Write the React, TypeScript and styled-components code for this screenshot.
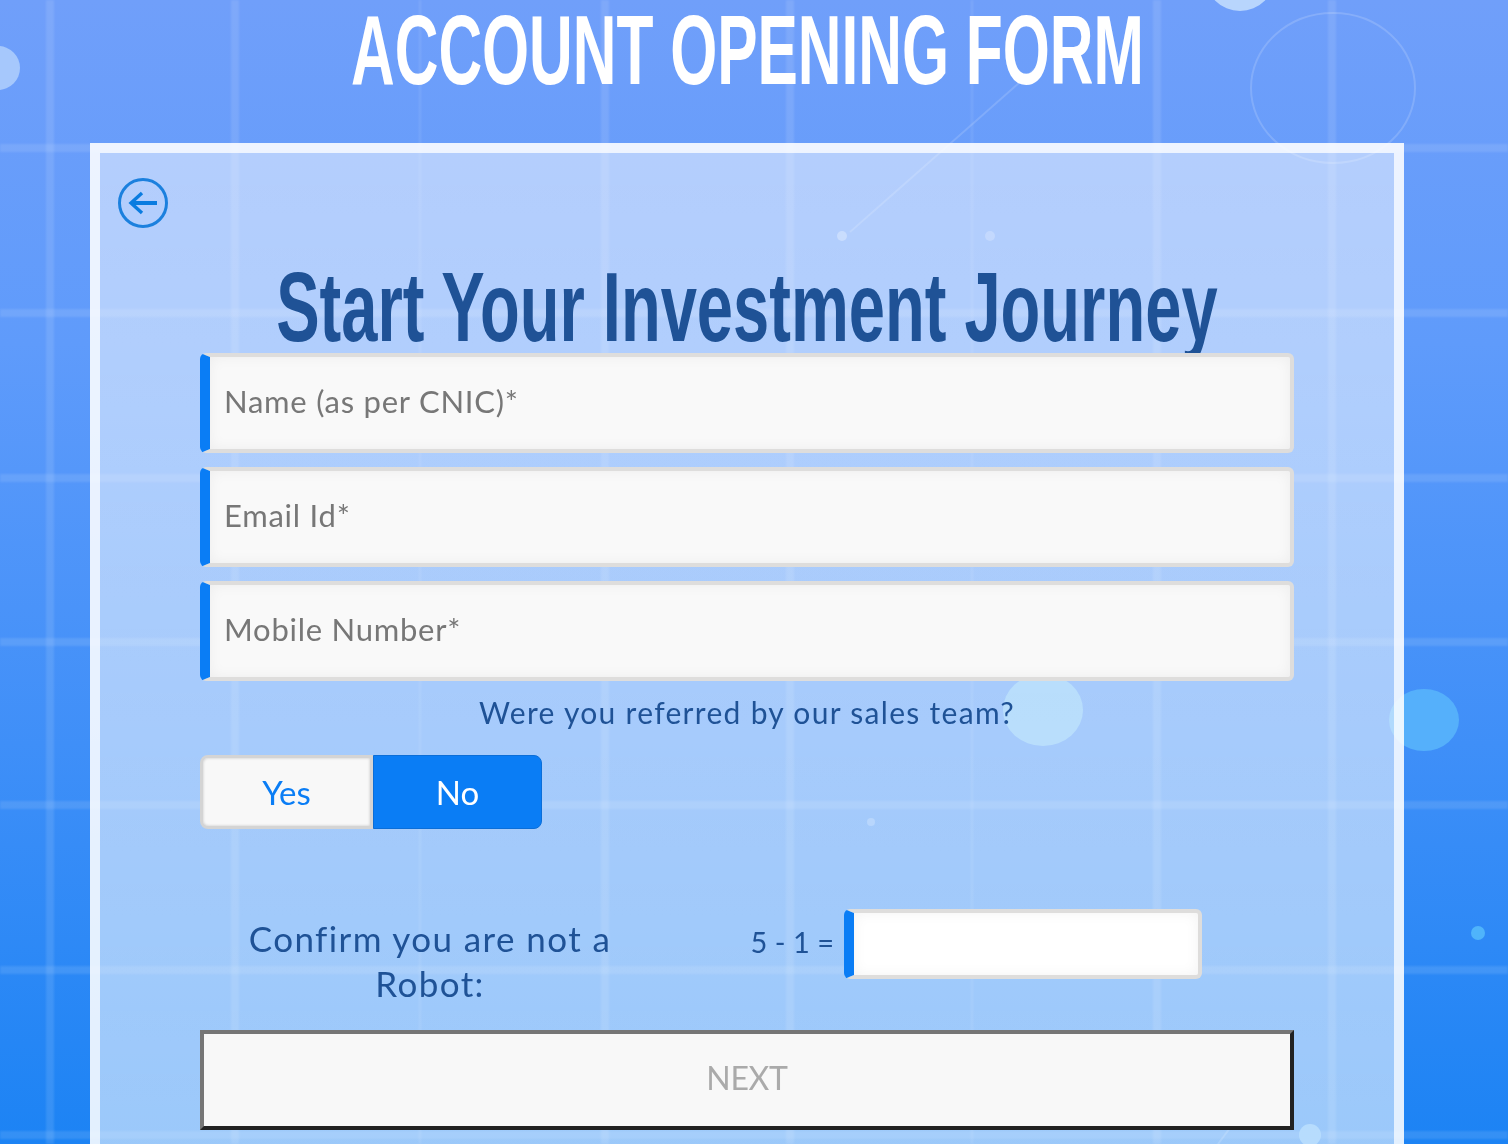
import React from "react";
import styled, { createGlobalStyle } from "styled-components";

const Global = createGlobalStyle`
  html, body { margin: 0; padding: 0; height: 1144px; overflow: hidden; }
  * { box-sizing: border-box; }
  #root { height: 1144px; }
`;

const body = `"Lato", "Open Sans", sans-serif`;
const narrow = `"Liberation Sans", Arial, sans-serif`;

const Page = styled.div`
  position: relative;
  width: 1508px;
  height: 1144px;
  overflow: hidden;
  padding: 0 104px 0 90px;
  background: linear-gradient(180deg, #709ffa 0%, #5f9bfb 30%, #3f8ff8 65%, #1c83f4 100%);
`;
const Backdrop = styled.svg`
  position: absolute;
  left: 0;
  top: 0;
`;
const Content = styled.div`
  position: relative;
`;
const Heading = styled.h1`
  margin: 0;
  height: 143px;
  display: flex;
  justify-content: center;
  font: 700 98px/100px ${narrow};
  color: #fff;
  white-space: nowrap;
`;
const Condensed = styled.span<{ $x: number }>`
  display: inline-block;
  flex: none;
  transform: scaleX(${p => p.$x});
`;
const Panel = styled.section`
  border: 10px solid rgba(255, 255, 255, 0.88);
  background: linear-gradient(180deg, rgba(255, 255, 255, 0.5), rgba(255, 255, 255, 0.57));
  background-clip: padding-box;
  height: 1100px;
  padding: 25px 100px 0;
  margin: 0;
`;
const BackButton = styled.button`
  display: block;
  border: 0;
  background: none;
  padding: 0;
  margin: 0 0 0 -82px;
  width: 50px;
  height: 50px;
`;
const Title = styled.h2`
  margin: 29px 0 3px;
  height: 93px;
  display: flex;
  justify-content: center;
  font: 700 98px/100px ${narrow};
  color: #1f5296;
  white-space: nowrap;
`;
const Stack = styled.div`
  position: relative;
  display: flex;
  flex-direction: column;
  gap: 14px;
`;
const Field = styled.input<{ $small?: boolean }>`
  display: block;
  width: ${p => (p.$small ? "358px" : "100%")};
  height: ${p => (p.$small ? "70px" : "100px")};
  border: 4px solid #dedddc;
  border-left: 10px solid #0a7df5;
  border-radius: 6px;
  background: ${p => (p.$small ? "#fff" : "#f9f9f9")};
  box-shadow: inset 0 0 14px rgba(0, 0, 0, 0.05);
  padding: 0 14px 4px;
  font: 400 31px ${body};
  letter-spacing: 0.75px;
  color: #777;
  outline: none;
  &::placeholder { color: #777; opacity: 1; }
`;
const Question = styled.p`
  margin: 12px 0 0;
  height: 45px;
  text-align: center;
  font: 400 30px/38px ${body};
  letter-spacing: 1.3px;
  color: #1f5296;
`;
const Toggle = styled.div`
  display: flex;
  margin-top: 17px;
`;
const ToggleButton = styled.button<{ $active?: boolean; $w: number }>`
  width: ${p => p.$w}px;
  height: 74px;
  font: 400 33px ${body};
  padding: 0;
  color: ${p => (p.$active ? "#fff" : "#0a7df5")};
  background: ${p => (p.$active ? "#0a7df5" : "#f8f8f8")};
  border: ${p => (p.$active ? "1px solid #0b6ed8" : "3px solid #d4d4d4")};
  border-radius: ${p => (p.$active ? "0 8px 8px 0" : "8px 0 0 8px")};
  box-shadow: ${p => (p.$active ? "none" : "inset 0 0 3px rgba(0, 0, 0, 0.2)")};
`;
const Captcha = styled.div`
  display: grid;
  grid-template-columns: 460px 184px 358px;
  margin-top: 80px;
  height: 121px;
`;
const RobotLabel = styled.div`
  text-align: center;
  padding-top: 7px;
  font: 400 35px/45px ${body};
  letter-spacing: 1.4px;
  color: #1f5296;
`;
const Sum = styled.div`
  height: 70px;
  display: flex;
  align-items: center;
  justify-content: flex-end;
  padding: 0 10px 5px 0;
  font: 400 29px ${body};
  color: #1f5296;
`;
const NextButton = styled.button`
  display: block;
  width: 100%;
  height: 100px;
  padding: 0 0 6px;
  border: 4px solid;
  border-color: #767676 #222 #222 #767676;
  background: #f8f8f8;
  font: 400 32px ${body};
  letter-spacing: -0.3px;
  color: #aaa;
`;

const hLines = [148, 313, 478, 642, 805, 970, 1135];
const vLines = [50, 235, 420, 605, 790, 972, 1157, 1332];

export default function App() {
  return (
    <Page>
      <Global />
      <Backdrop width="1508" height="1144" viewBox="0 0 1508 1144">
        <defs>
          <filter id="soft"><feGaussianBlur stdDeviation="1.2" /></filter>
        </defs>
        <g filter="url(#soft)">
          {hLines.map(y => (
            <rect key={y} x="0" y={y - 4} width="1508" height="8" fill="#fff" opacity="0.11" />
          ))}
          {vLines.map((x, i) => (
            <rect key={x} x={x - (i % 3 === 2 ? 1 : 4)} y="0" width={i % 3 === 2 ? 2 : 8} height="1144" fill="#fff" opacity="0.11" />
          ))}
        </g>
        <circle cx="1240" cy="-24" r="35" fill="#b8d5fd" />
        <circle cx="-2" cy="68" r="22" fill="#a6c8fc" />
        <ellipse cx="1333" cy="88" rx="82" ry="75" fill="none" stroke="#fff" strokeOpacity="0.16" strokeWidth="2" />
        <ellipse cx="1043" cy="710" rx="40" ry="36" fill="#69b9f9" />
        <ellipse cx="1424" cy="720" rx="35" ry="31" fill="#55b0fb" />
        <circle cx="842" cy="236" r="5" fill="#fff" opacity="0.3" />
        <circle cx="990" cy="236" r="5" fill="#fff" opacity="0.22" />
        <circle cx="871" cy="822" r="4" fill="#fff" opacity="0.22" />
        <circle cx="1478" cy="933" r="7" fill="#4fb4fb" />
        <circle cx="1310" cy="1135" r="11" fill="#5ab0fb" />
        <path d="M850 232 L1045 60" stroke="#fff" strokeOpacity="0.15" strokeWidth="2" fill="none" />
        <path d="M1218 1144 L1262 1085" stroke="#fff" strokeOpacity="0.15" strokeWidth="2" fill="none" />
      </Backdrop>
      <Content>
        <Heading><Condensed $x={0.617}>ACCOUNT OPENING FORM</Condensed></Heading>
        <Panel>
          <BackButton aria-label="Back">
            <svg width="50" height="50" viewBox="0 0 50 50" fill="none">
              <circle cx="25" cy="25" r="23.5" stroke="#1b80de" strokeWidth="3" />
              <path d="M39 25H13" stroke="#0a7ce0" strokeWidth="4" />
              <path d="M24 15L13 25L24 35" stroke="#0a7ce0" strokeWidth="3.4" />
            </svg>
          </BackButton>
          <Title><Condensed $x={0.664}>Start Your Investment Journey</Condensed></Title>
          <Stack>
            <Field placeholder="Name (as per CNIC)*" />
            <Field placeholder="Email Id*" />
            <Field placeholder="Mobile Number*" />
          </Stack>
          <Question>Were you referred by our sales team?</Question>
          <Toggle>
            <ToggleButton $w={173}>Yes</ToggleButton>
            <ToggleButton $w={169} $active>No</ToggleButton>
          </Toggle>
          <Captcha>
            <RobotLabel>Confirm you are not a<br />Robot:</RobotLabel>
            <Sum>5 - 1 =</Sum>
            <Field $small />
          </Captcha>
          <NextButton>NEXT</NextButton>
        </Panel>
      </Content>
    </Page>
  );
}
